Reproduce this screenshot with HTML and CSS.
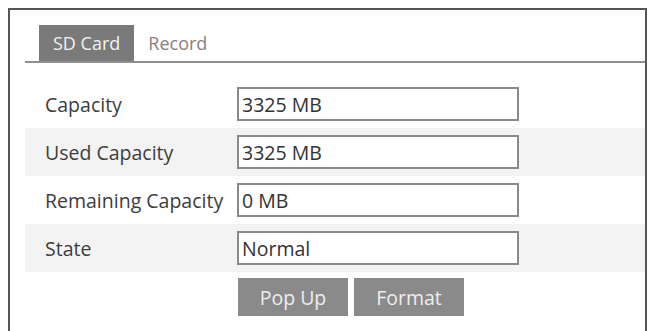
FILE: index.html
```html
<!DOCTYPE html>
<html lang="en">
<head>
    <meta charset="UTF-8">
    <title>SD Card</title>
    <link rel="stylesheet" href="styles.css">
</head>
<body>
    <div class="panel">
        <div class="tabs">
            <span class="tab active">SD Card</span>
            <span class="tab">Record</span>
        </div>
        <div class="rows">
            <div class="row">
                <label for="capacity">Capacity</label>
                <input type="text" id="capacity" value="3325 MB" readonly>
            </div>
            <div class="row stripe">
                <label for="used">Used Capacity</label>
                <input type="text" id="used" value="3325 MB" readonly>
            </div>
            <div class="row">
                <label for="remaining">Remaining Capacity</label>
                <input type="text" id="remaining" value="0 MB" readonly>
            </div>
            <div class="row stripe">
                <label for="state">State</label>
                <input type="text" id="state" value="Normal" readonly>
            </div>
        </div>
        <div class="buttons">
            <button class="btn">Pop Up</button>
            <button class="btn">Format</button>
        </div>
    </div>
</body>
</html>
```

FILE: styles.css
```css
body {
    font-family: 'Open Sans', sans-serif;
    background-color: #fff;
    margin: 0;
    padding: 0;
}
.panel {
    position: relative;
    margin: 8px 8px 0 8px;
    width: 620px;
    height: 317px;
    border: 2px solid #555;
    border-bottom: none;
    padding: 15px 0 0 15px;
}
.panel::after {
    content: "";
    position: absolute;
    left: -2px;
    bottom: 0;
    width: 6px;
    height: 2px;
    background: #555;
}
.tabs {
    display: flex;
    padding-left: 14px;
    border-bottom: 2px solid #8f8f8f;
}
.tab {
    height: 36px;
    line-height: 36px;
    padding: 0 14px;
    font-size: 18px;
    color: #8a7f7f;
}
.tab.active {
    background-color: #7a7a7a;
    color: #f2f2f2;
}
.rows {
    margin-top: 17px;
}
.row {
    display: flex;
    align-items: center;
    height: 48px;
}
.stripe {
    background-color: #f3f3f3;
}
label {
    width: 192px;
    padding-left: 20px;
    font-size: 19.5px;
    color: #3d3d3d;
    white-space: nowrap;
}
input {
    width: 282px;
    height: 34px;
    padding: 0 3px;
    font-family: 'Open Sans', sans-serif;
    font-size: 19.5px;
    color: #333;
    border: 2px solid #8a8a8a;
    border-radius: 0;
    box-sizing: border-box;
    background: #fff;
}
input:focus {
    outline: none;
}
.buttons {
    display: flex;
    gap: 6px;
    margin-top: 6px;
    padding-left: 213px;
}
.btn {
    width: 110px;
    height: 38px;
    border: none;
    background-color: #8a8a8a;
    color: #eee;
    font-family: 'Open Sans', sans-serif;
    font-size: 19.5px;
}
```
